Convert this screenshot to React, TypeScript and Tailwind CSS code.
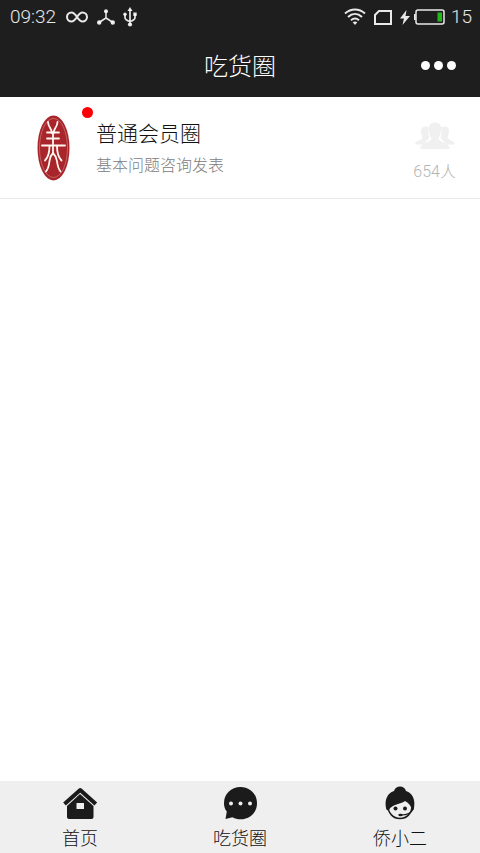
import React from 'react';

const StatusBar: React.FC = () => (
  <div className="h-[34px] pl-[10px] pr-2 flex items-center justify-between text-white/90">
    <div className="flex items-center">
      <span className="font-['Roboto',sans-serif] font-light text-[19px] leading-6 w-[56px]">09:32</span>
      <svg width="22" height="12" viewBox="0 0 22 12" fill="none" stroke="currentColor" strokeWidth="2">
        <path d="M11 6C9 3 7.500 1.500 5.500 1.500a4.500 4.500 0 0 0 0 9C7.500 10.500 9 9 11 6s3.500-4.500 5.500-4.500a4.500 4.500 0 0 1 0 9C14.500 10.500 13 9 11 6Z" />
      </svg>
      <svg className="ml-[9px]" width="18" height="16" viewBox="0 0 18 16" fill="currentColor">
        <path d="M9 2v7L2 13.500M9 9l7 4.500" stroke="currentColor" strokeWidth="1.500" fill="none" />
        <circle cx="9" cy="2.200" r="2" />
        <circle cx="2.200" cy="13.500" r="2.200" />
        <circle cx="15.800" cy="13.500" r="2.200" />
      </svg>
      <svg className="ml-2" width="14" height="20" viewBox="0 0 14 20" fill="currentColor">
        <path d="M7 3v14M2 7v3.500c0 2 1.500 3 5 4 3.500-1 5-2 5-4V7" stroke="currentColor" strokeWidth="1.700" fill="none" />
        <path d="M7 0l2.500 4h-5z" />
        <circle cx="2" cy="7.200" r="1.700" />
        <path d="M10.300 5.500h3.400v3.400h-3.400z" />
        <circle cx="7" cy="17.500" r="2.100" />
      </svg>
    </div>
    <div className="flex items-center">
      <svg width="22" height="18" viewBox="0 0 22 18" fill="none" stroke="currentColor" strokeWidth="2">
        <path d="M1 5.500c6-5.300 14-5.300 20 0M4 9c4.300-4 9.700-4 14 0M7 12.300c2.500-2.200 5.500-2.200 8 0" />
        <path d="M8.700 14.200c1.500-1 3.100-1 4.600 0L11 17z" fill="currentColor" stroke="none" />
      </svg>
      <svg className="ml-2" width="18" height="15" viewBox="0 0 18 15" fill="none" stroke="currentColor" strokeWidth="2">
        <path d="M5 1h12v13H1V5z" />
      </svg>
      <svg className="ml-2" width="10" height="15" viewBox="0 0 10 15" fill="currentColor">
        <path d="M6.500 0L0 8.500h4L2.500 15 10 6H5.500z" />
      </svg>
      <svg className="ml-1" width="31" height="16" viewBox="0 0 31 16" fill="none">
        <path d="M0 5h1.500v6H0z" fill="currentColor" />
        <rect x="2" y="1" width="28" height="14" rx="2" stroke="currentColor" strokeWidth="1.500" />
        <path d="M23.500 3.500h4.500v9h-4.500z" fill="#22b81c" />
      </svg>
      <span className="ml-[6px] font-['Roboto',sans-serif] font-light text-[19px] leading-6">15</span>
    </div>
  </div>
);

const SealLogo: React.FC = () => (
  <svg width="34" height="66" viewBox="0 0 34 66" fill="none">
    <ellipse cx="17.500" cy="33" rx="16" ry="32.500" fill="#a8262b" />
    <ellipse cx="17.500" cy="33" rx="14" ry="29.500" stroke="#cf7d78" strokeWidth="0.700" />
    <g stroke="#fff6ef" strokeWidth="1.800" strokeLinecap="round">
      <path d="M12 7c.3 6 3.500 5 3.800 11M21.500 7c-.3 6-3.500 5-3.800 11" />
      <path d="M11 17.500h12M11 23.500h12M6 30.500h23M17 17v22" />
      <path d="M13.500 31c0 7-1 11-4.500 14.500M21 31c0 7 1 11 4.500 14.500" />
      <path d="M17 38c-2 2-3 4-3.500 8-.5 5-1.500 8-3.500 10.500M17 38c2 2 3.500 4 4 8 .5 5 1.500 8 3.500 10.500" />
    </g>
  </svg>
);

const MembersIcon: React.FC = () => (
  <svg width="40" height="28" viewBox="0 0 40 28" fill="#f0f0f0">
    <path d="M6.500 12c-1.500-4 0-7.500 4-7.500 1.500 0 3 .5 3.500 1.500-1.500 3-1 6 .5 9-1 3-4 4-6 7.500H0c0-4 6-4 7.500-6.500-.5-1.200-.7-2.500-1-4zM33.500 12c1.500-4 0-7.500-4-7.500-1.500 0-3 .5-3.500 1.500 1.500 3 1 6-.5 9 1 3 4 4 6 7.500H40c0-4-6-4-7.500-6.500.5-1.200.7-2.500 1-4z" />
    <path d="M14 8c-.5-5 1.500-7.500 6-7.500s6.500 2.500 6 7.500c1 1 .3 3-.7 3.500-.3 2-1 3.500-1.800 4.500 0 5 11 3.500 11 11H5.500c0-7.500 11-6 11-11-.8-1-1.500-2.500-1.800-4.500-1-.5-1.700-2.500-.7-3.500z" />
  </svg>
);

const HomeIcon: React.FC = () => (
  <svg width="36" height="34" viewBox="0 0 36 34">
    <path d="M2.500 18L18.200 4l15.600 14" fill="none" stroke="#1b1b1b" strokeWidth="4" strokeLinejoin="round" />
    <path d="M18 8l13.500 12v11a2 2 0 0 1-2 2H7a2 2 0 0 1-2-2V20z" fill="#1b1b1b" />
    <path d="M14.500 17h7.500v6h-7.500z" fill="#efefef" />
  </svg>
);

const ChatIcon: React.FC = () => (
  <svg width="36" height="34" viewBox="0 0 36 34">
    <path d="M18.500 1C28 1 35 8 35 17.200S28 33.300 18.500 33.300c-3 0-5.500-.5-8-2L3.500 33l1.300-7.500C2.700 23 2 20.300 2 17.200 2 8 9 1 18.500 1z" fill="#1b1b1b" />
    <g fill="#efefef">
      <circle cx="9" cy="17.500" r="2" />
      <circle cx="18.500" cy="17.500" r="2" />
      <circle cx="28" cy="17.500" r="2" />
    </g>
  </svg>
);

const ServiceIcon: React.FC = () => (
  <svg width="36" height="34" viewBox="0 0 36 34">
    <path d="M6 20c0 7 5 12.500 12 12.500S30 27 30 20l-2-7H8z" fill="#efefef" stroke="#1b1b1b" strokeWidth="1.500" />
    <path d="M4 22c-1.500-8 1-14.500 8-17C13 2 15 .5 18 .5s5 1.500 6 4.500c7 2.500 9.500 9 8 17 0 1.500-.7 2.500-2 2.500-.5-4-3-7.500-7-9.500-5 4-12 2-16.500 9.500C5 24.500 4 23.500 4 22z" fill="#1b1b1b" />
    <circle cx="13.500" cy="22.500" r="2" fill="#1b1b1b" />
    <circle cx="23" cy="22.500" r="2" fill="#1b1b1b" />
    <path d="M31 23c-1.500 4-5.500 6-12 6" fill="none" stroke="#1b1b1b" strokeWidth="1.200" />
    <ellipse cx="18.500" cy="29" rx="2.200" ry="1.300" fill="#1b1b1b" />
  </svg>
);

const tabs = [
  { label: '首页', icon: <HomeIcon /> },
  { label: '吃货圈', icon: <ChatIcon /> },
  { label: '侨小二', icon: <ServiceIcon /> },
];

export const App: React.FC = () => {
  return (
    <div className="min-h-screen flex flex-col bg-white font-light font-['Noto_Sans_CJK_SC',sans-serif]">
      <header className="bg-[#1e1e1e] text-white">
        <StatusBar />
        <div className="h-[63px] px-6 grid grid-cols-[1fr_auto_1fr] items-center">
          <h1 className="col-start-2 pb-[2px] text-[24px] leading-8">吃货圈</h1>
          <button type="button" aria-label="更多" className="justify-self-end flex gap-1">
            <span className="size-[9px] rounded-full bg-white" />
            <span className="size-[9px] rounded-full bg-white" />
            <span className="size-[9px] rounded-full bg-white" />
          </button>
        </div>
      </header>

      <main className="flex-1">
        <a href="#circle" className="h-[102px] pl-3 pr-6 flex items-center border-b border-[#e9e9e9]">
          <div className="relative w-[84px] pl-6">
            <SealLogo />
            <span className="absolute right-[3px] -top-2 size-[11px] rounded-full bg-[#fb0006]" />
          </div>
          <div className="flex-1">
            <h2 className="text-[21px] leading-8 text-[#111]">普通会员圈</h2>
            <p className="text-[16px] leading-8 text-[#808080]">基本问题咨询发表</p>
          </div>
          <div className="pt-3 flex flex-col items-center">
            <MembersIcon />
            <span className="mt-2 font-['Roboto','Noto_Sans_CJK_SC',sans-serif] text-[16px] leading-7 text-[#b5b5b5]">
              654人
            </span>
          </div>
        </a>
      </main>

      {/* Bottom tabs */}
      <nav className="h-[72px] bg-[#efefef] grid grid-cols-3">
        {tabs.map((tab) => (
          <a key={tab.label} href="#tab" className="pt-[5px] flex flex-col items-center text-[#111]">
            {tab.icon}
            <span className="mt-[3px] text-[18px] leading-7">{tab.label}</span>
          </a>
        ))}
      </nav>
    </div>
  );
};

export default App;
